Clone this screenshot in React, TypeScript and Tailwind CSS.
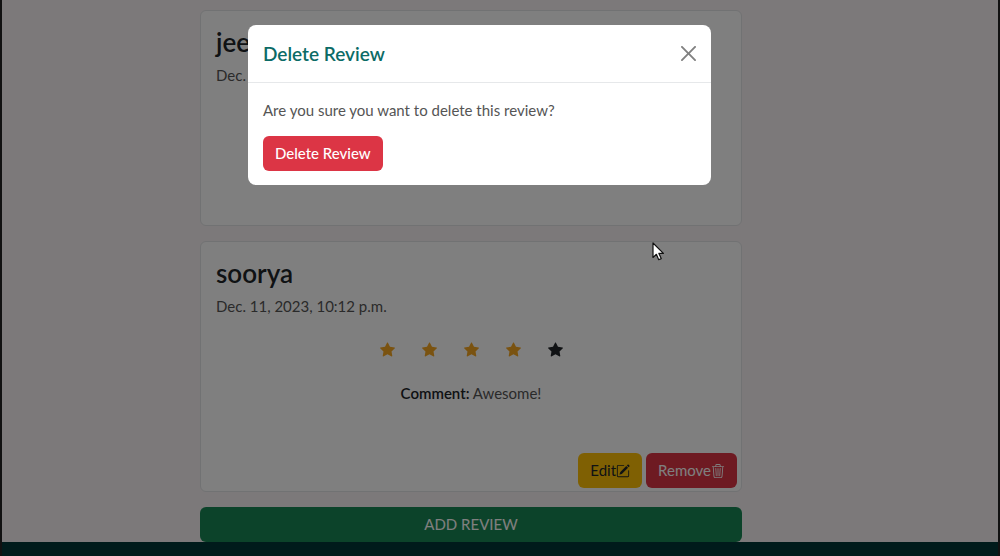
import { BsPencilSquare, BsStarFill, BsTrash3 } from "react-icons/bs";

function Stars({ rating }: { rating: number }) {
  return (
    <div role="img" aria-label={`${rating} out of 5 stars`} className="flex justify-center gap-[27px]">
      {[1, 2, 3, 4, 5].map((n) => (
        <BsStarFill key={n} size={15} className={n <= rating ? "text-[#f5a623]" : "text-[#212529]"} />
      ))}
    </div>
  );
}

function ReviewHeading({ name, date }: { name: string; date: string }) {
  return (
    <>
      <h2 className="mb-[5px] text-[26px] leading-8 font-semibold text-[#212529]">{name}</h2>
      <p className="leading-6">{date}</p>
    </>
  );
}

function CloseIcon() {
  return (
    <svg aria-hidden="true" viewBox="0 0 16 16" fill="currentColor" className="size-[15px]">
      <path d="M.293.293a1 1 0 0 1 1.414 0L8 6.586 14.293.293a1 1 0 1 1 1.414 1.414L9.414 8l6.293 6.293a1 1 0 0 1-1.414 1.414L8 9.414l-6.293 6.293a1 1 0 0 1-1.414-1.414L6.586 8 .293 1.707a1 1 0 0 1 0-1.414z" />
    </svg>
  );
}

function DeleteDialog() {
  return (
    <div className="fixed inset-0 bg-black/50 pt-[25px] pr-[41px]">
      <div
        role="dialog"
        aria-modal="true"
        aria-labelledby="dialog-title"
        className="mx-auto w-full max-w-[463px] rounded-lg bg-white"
      >
        <header className="flex items-center justify-between border-b border-[#e6e8ea] px-[15px] py-[14px]">
          <h1 id="dialog-title" className="text-[19px] leading-[29px] font-semibold text-[#0b6b66]">
            Delete Review
          </h1>
          <button type="button" aria-label="Close" className="text-[#808080]">
            <CloseIcon />
          </button>
        </header>
        <div className="px-[15px] pt-[15px] pb-[14px]">
          <p className="mb-[14px] leading-6">Are you sure you want to delete this review?</p>
          <button type="button" className="h-[35px] rounded-md bg-[#dc3545] px-3 font-medium text-white">
            Delete Review
          </button>
        </div>
      </div>
    </div>
  );
}

function Pointer() {
  return (
    <svg aria-hidden="true" viewBox="0 0 12 19" className="fixed top-[242px] left-[652px] h-[19px] w-3">
      <path
        d="M1 1v14.5l3.4-3.2 2.3 5.4 2.5-1.1-2.3-5.2h4.5z"
        fill="#fff"
        stroke="#111"
        strokeWidth="1.2"
        strokeLinejoin="round"
      />
    </svg>
  );
}

export default function App() {
  return (
    <div className="flex min-h-screen flex-col border-x-2 border-[#222] bg-[#f8f2f4] font-['Lato',sans-serif] text-[15px] text-[#555]">
      <main className="mx-auto w-full max-w-[600px] flex-1 pt-[10px] pr-[58px]">
        <article className="mb-[15px] min-h-[216px] rounded-md border border-[#e2e4e6] bg-white p-[15px]">
          <ReviewHeading name="jee" date="Dec." />
        </article>
        <article className="mb-[15px] flex min-h-[251px] flex-col rounded-md border border-[#e2e4e6] bg-white">
          <div className="flex-1 p-[15px]">
            <ReviewHeading name="soorya" date="Dec. 11, 2023, 10:12 p.m." />
            <div className="mt-6">
              <Stars rating={4} />
            </div>
            <p className="mt-6 text-center leading-6">
              <strong className="font-semibold text-[#212529]">Comment:</strong> Awesome!
            </p>
          </div>
          <div className="flex justify-end gap-1 px-1 pb-[3px]">
            <button type="button" className="flex h-[35px] items-center rounded-md bg-[#ffc107] px-3 text-[#212529]">
              Edit
              <BsPencilSquare size={14} />
            </button>
            <button type="button" className="flex h-[35px] items-center rounded-md bg-[#dc3545] px-3 text-white">
              Remove
              <BsTrash3 size={14} />
            </button>
          </div>
        </article>
        <button type="button" className="block h-[35px] w-full rounded-md bg-[#198754] text-white">
          ADD REVIEW
        </button>
      </main>
      <footer className="h-[14px] bg-[#003636]" />
      <DeleteDialog />
      <Pointer />
    </div>
  );
}
